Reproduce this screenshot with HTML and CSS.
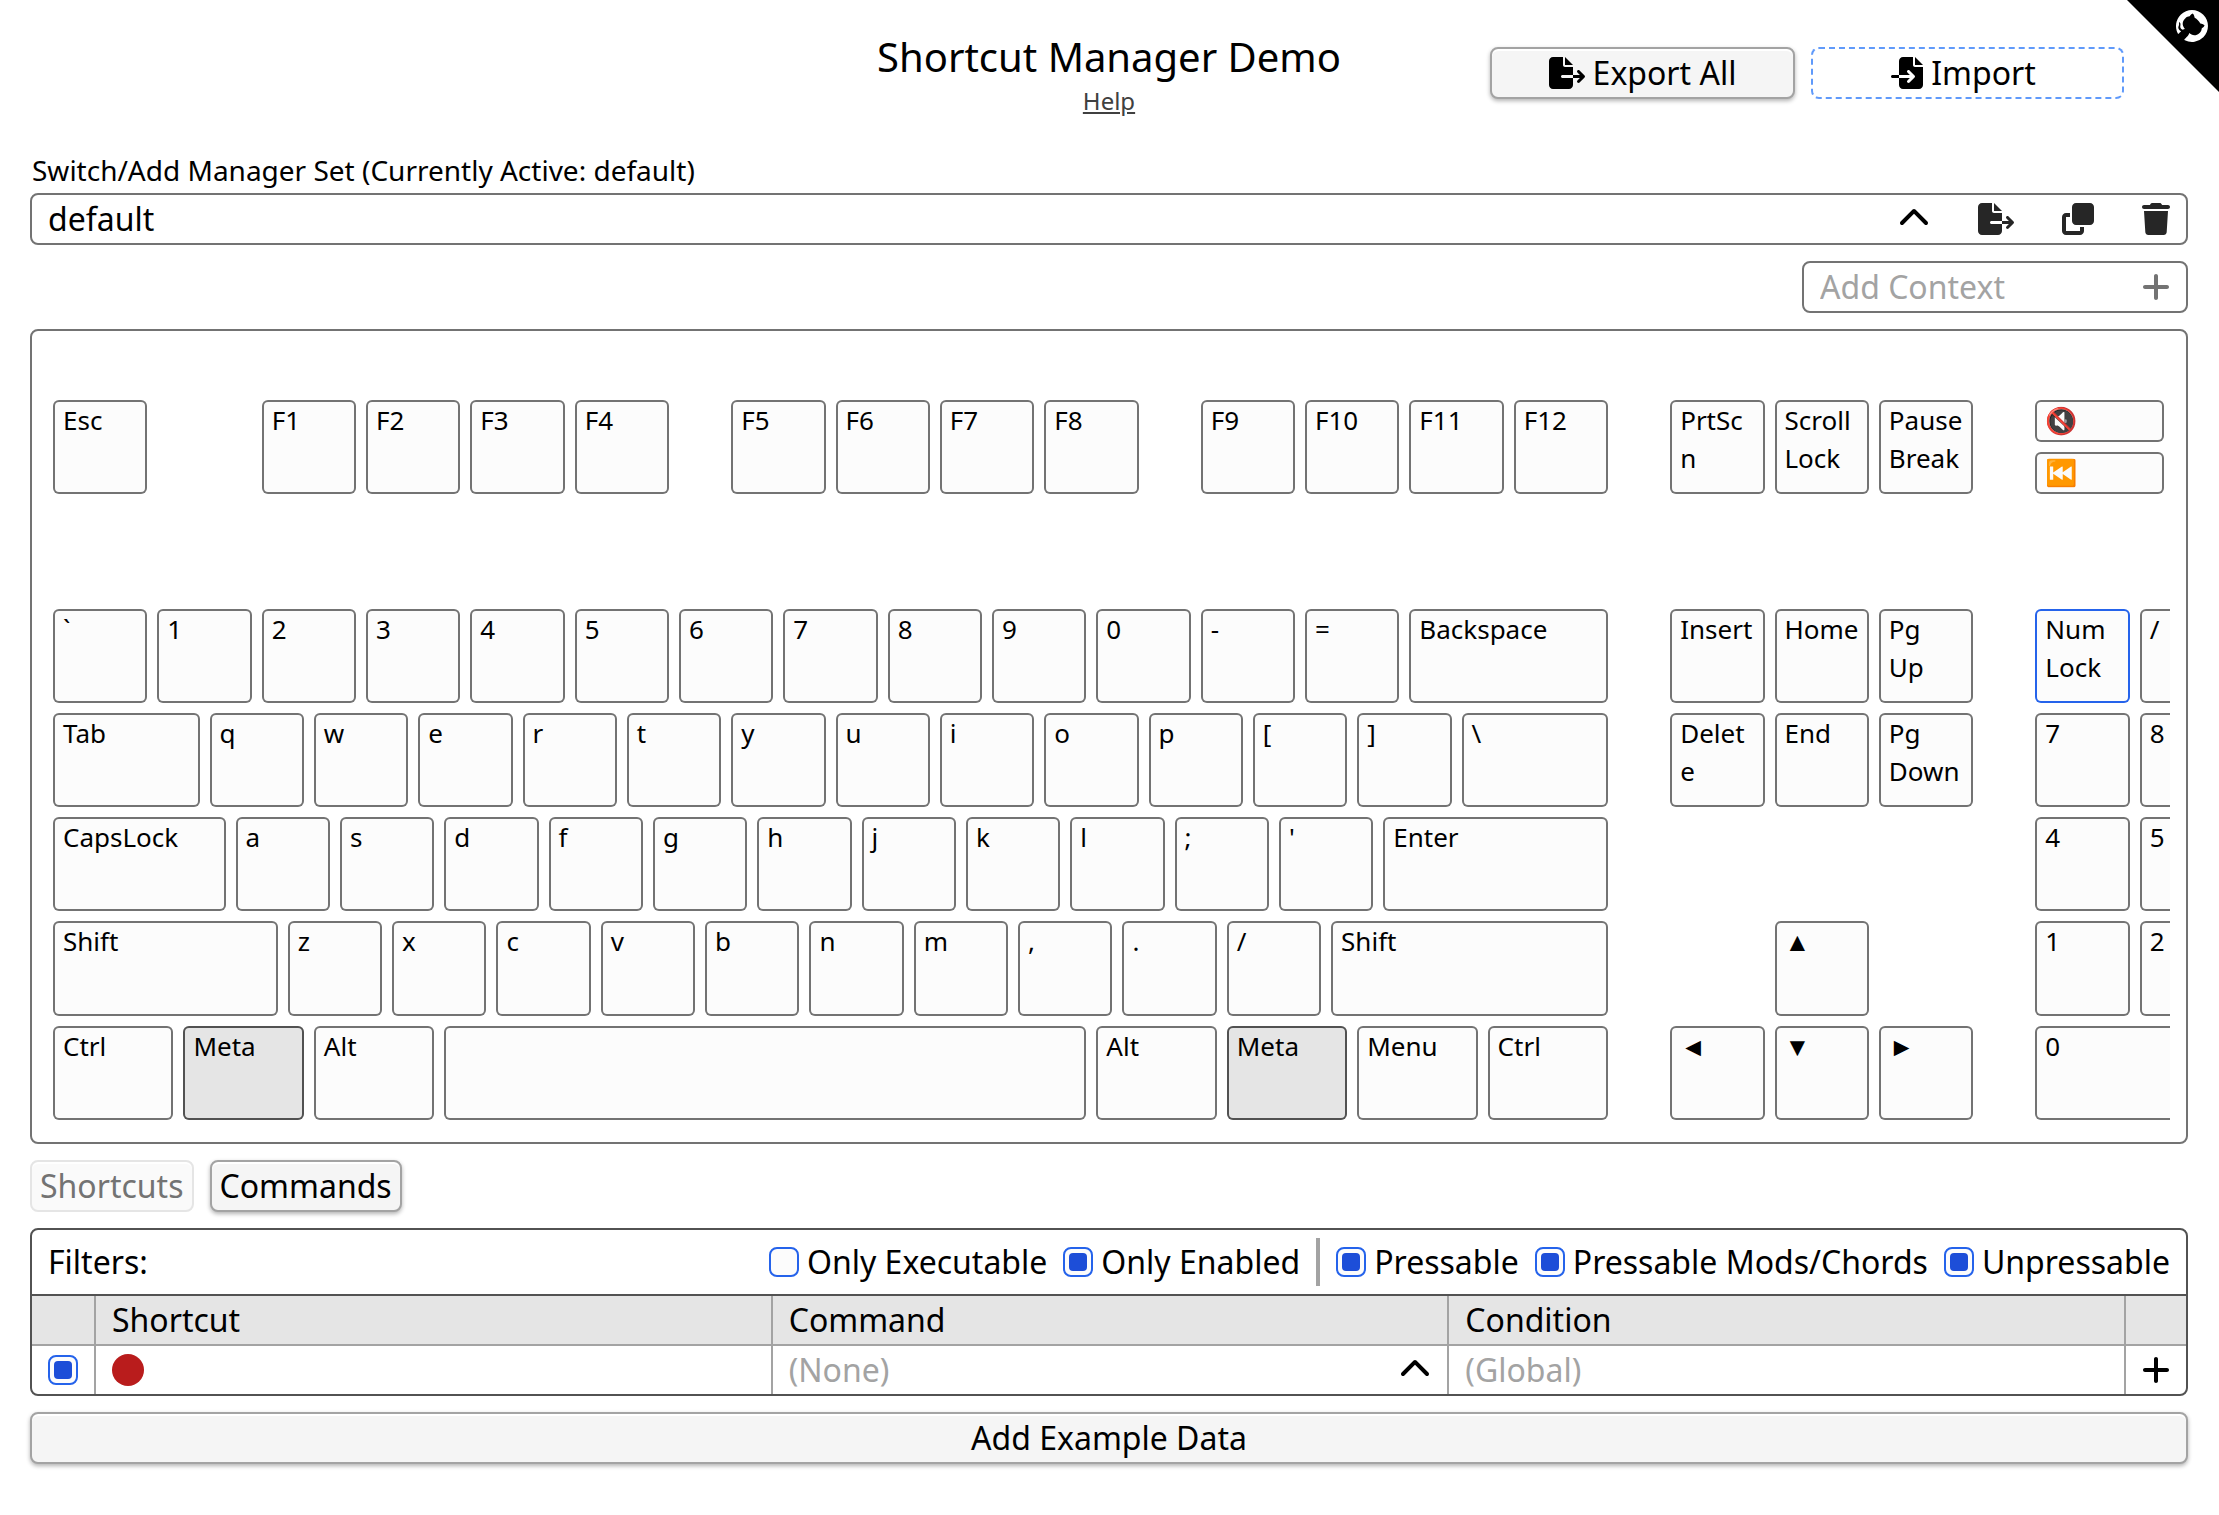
FILE: index.html
```html
<!DOCTYPE html>
<html lang="en">
<head>
<meta charset="utf-8">
<meta name="viewport" content="width=device-width, initial-scale=1">
<title>Shortcut Manager Demo</title>
<link rel="stylesheet" href="styles.css">
</head>
<body>
<svg class="sprite" aria-hidden="true">
  <symbol id="i-export" viewBox="0 0 576 512"><path d="M0 64C0 28.7 28.7 0 64 0H224V128c0 17.7 14.3 32 32 32H384V288H216c-13.3 0-24 10.7-24 24s10.7 24 24 24H384V448c0 35.3-28.7 64-64 64H64c-35.3 0-64-28.7-64-64V64zM384 336V288H494.1l-39-39c-9.4-9.4-9.4-24.6 0-33.9s24.6-9.4 33.9 0l80 80c9.4 9.4 9.4 24.6 0 33.9l-80 80c-9.4 9.4-24.6 9.4-33.9 0s-9.4-24.6 0-33.9l39-39H384zm0-208H256V0L384 128z"/></symbol>
  <symbol id="i-import" viewBox="0 0 512 512"><path d="M128 64c0-35.3 28.7-64 64-64H352V128c0 17.7 14.3 32 32 32H512V448c0 35.3-28.7 64-64 64H192c-35.3 0-64-28.7-64-64V336H302.1l-39 39c-9.4 9.4-9.4 24.6 0 33.9s24.6 9.4 33.9 0l80-80c9.4-9.4 9.4-24.6 0-33.9l-80-80c-9.4-9.4-24.6-9.4-33.9 0s-9.4 24.6 0 33.9l39 39H128V64zm0 224v48H24c-13.3 0-24-10.7-24-24s10.7-24 24-24H128zM512 128H384V0L512 128z"/></symbol>
  <symbol id="i-chevron" viewBox="0 0 512 512"><path d="M233.4 105.4c12.5-12.5 32.8-12.5 45.3 0l192 192c12.5 12.5 12.5 32.8 0 45.3s-32.8 12.5-45.3 0L256 173.3 86.6 342.6c-12.5 12.5-32.8 12.5-45.3 0s-12.5-32.8 0-45.3l192-192z"/></symbol>
  <symbol id="i-clone" viewBox="0 0 512 512"><path d="M288 448H64V224h64V160H64c-35.3 0-64 28.7-64 64V448c0 35.3 28.7 64 64 64H288c35.3 0 64-28.7 64-64V384H288v64zm-64-96H448c35.3 0 64-28.7 64-64V64c0-35.3-28.7-64-64-64H224c-35.3 0-64 28.7-64 64V288c0 35.3 28.7 64 64 64z"/></symbol>
  <symbol id="i-trash" viewBox="0 0 448 512"><path d="M135.2 17.7L128 32H32C14.3 32 0 46.3 0 64S14.3 96 32 96H416c17.7 0 32-14.3 32-32s-14.3-32-32-32H320l-7.2-14.3C307.4 6.8 296.3 0 284.2 0H163.8c-12.1 0-23.2 6.8-28.6 17.7zM416 128H32L53.2 467c1.6 25.3 22.6 45 47.9 45H346.9c25.3 0 46.3-19.7 47.9-45L416 128z"/></symbol>
  <symbol id="i-plus" viewBox="0 0 448 512"><path d="M256 80c0-17.7-14.3-32-32-32s-32 14.3-32 32V224H48c-17.7 0-32 14.3-32 32s14.3 32 32 32H192V432c0 17.7 14.3 32 32 32s32-14.3 32-32V288H400c17.7 0 32-14.3 32-32s-14.3-32-32-32H256V80z"/></symbol>
</svg>

<a class="corner" href="#source" aria-label="View source on GitHub">
  <svg viewBox="0 0 92 92" aria-hidden="true">
    <path d="M0 0H92V92Z"/>
    <g transform="translate(65 26) rotate(45) scale(2) translate(-8 -8)"><path class="mark" d="M8 0C3.58 0 0 3.58 0 8c0 3.54 2.29 6.53 5.47 7.59.4.07.55-.17.55-.38 0-.19-.01-.82-.01-1.49-2.01.37-2.53-.49-2.69-.94-.09-.23-.48-.94-.82-1.13-.28-.15-.68-.52-.01-.53.63-.01 1.08.58 1.23.82.72 1.21 1.87.87 2.33.66.07-.52.28-.87.51-1.07-1.78-.2-3.64-.89-3.64-3.95 0-.87.31-1.59.82-2.15-.08-.2-.36-1.02.08-2.12 0 0 .67-.21 2.2.82.64-.18 1.32-.27 2-.27.68 0 1.36.09 2 .27 1.53-1.04 2.2-.82 2.2-.82.44 1.1.16 1.92.08 2.12.51.56.82 1.27.82 2.15 0 3.07-1.87 3.75-3.65 3.95.29.25.54.73.54 1.48 0 1.07-.01 1.93-.01 2.2 0 .21.15.46.55.38A8.013 8.013 0 0016 8c0-4.42-3.58-8-8-8z"/></g>
  </svg>
</a>

<header class="top">
  <div class="heading">
    <h1>Shortcut Manager Demo</h1>
    <a class="help" href="#help">Help</a>
  </div>
  <div class="top-actions">
    <button type="button" class="btn export"><svg class="icon wide"><use href="#i-export"/></svg>Export All</button>
    <button type="button" class="btn import"><svg class="icon"><use href="#i-import"/></svg>Import</button>
  </div>
</header>

<main>
  <label class="set-label" for="set">Switch/Add Manager Set (Currently Active: default)</label>
  <div class="field set">
    <input id="set" type="text" value="default">
    <button type="button" class="icon-btn" aria-label="Show sets"><svg class="icon"><use href="#i-chevron"/></svg></button>
    <button type="button" class="icon-btn soft" aria-label="Export set"><svg class="icon wide"><use href="#i-export"/></svg></button>
    <button type="button" class="icon-btn soft" aria-label="Duplicate set"><svg class="icon"><use href="#i-clone"/></svg></button>
    <button type="button" class="icon-btn soft" aria-label="Delete set"><svg class="icon narrow"><use href="#i-trash"/></svg></button>
  </div>

  <div class="field context">
    <input type="text" placeholder="Add Context" aria-label="Add Context">
    <button type="button" class="icon-btn muted" aria-label="Add"><svg class="icon narrow"><use href="#i-plus"/></svg></button>
  </div>

  <section class="panel" aria-label="Keyboard">
    <div class="clip">
      <div class="keyboard">
        <div class="row">
          <button class="key">Esc</button><span class="k4"></span>
          <button class="key">F1</button><button class="key">F2</button><button class="key">F3</button><button class="key">F4</button><span class="k2"></span>
          <button class="key">F5</button><button class="key">F6</button><button class="key">F7</button><button class="key">F8</button><span class="k2"></span>
          <button class="key">F9</button><button class="key">F10</button><button class="key">F11</button><button class="key">F12</button><span class="k2"></span>
          <button class="key">PrtScn</button><button class="key">Scroll Lock</button><button class="key">Pause Break</button><span class="k2"></span>
          <div class="media k6"><button class="key">🔇</button><button class="key">⏮️</button></div>
        </div>
        <div class="row"></div>
        <div class="row">
          <button class="key">`</button><button class="key">1</button><button class="key">2</button><button class="key">3</button><button class="key">4</button><button class="key">5</button><button class="key">6</button><button class="key">7</button><button class="key">8</button><button class="key">9</button><button class="key">0</button><button class="key">-</button><button class="key">=</button><button class="key k8">Backspace</button><span class="k2"></span>
          <button class="key">Insert</button><button class="key">Home</button><button class="key">Pg<br>Up</button><span class="k2"></span>
          <button class="key active">Num Lock</button><button class="key">/</button>
        </div>
        <div class="row">
          <button class="key k6">Tab</button><button class="key">q</button><button class="key">w</button><button class="key">e</button><button class="key">r</button><button class="key">t</button><button class="key">y</button><button class="key">u</button><button class="key">i</button><button class="key">o</button><button class="key">p</button><button class="key">[</button><button class="key">]</button><button class="key k6">\</button><span class="k2"></span>
          <button class="key">Delete</button><button class="key">End</button><button class="key">Pg Down</button><span class="k2"></span>
          <button class="key">7</button><button class="key">8</button>
        </div>
        <div class="row">
          <button class="key k7">CapsLock</button><button class="key">a</button><button class="key">s</button><button class="key">d</button><button class="key">f</button><button class="key">g</button><button class="key">h</button><button class="key">j</button><button class="key">k</button><button class="key">l</button><button class="key">;</button><button class="key">'</button><button class="key k9">Enter</button><span class="k16"></span>
          <button class="key">4</button><button class="key">5</button>
        </div>
        <div class="row">
          <button class="key k9">Shift</button><button class="key">z</button><button class="key">x</button><button class="key">c</button><button class="key">v</button><button class="key">b</button><button class="key">n</button><button class="key">m</button><button class="key">,</button><button class="key">.</button><button class="key">/</button><button class="key k11">Shift</button><span class="k6"></span>
          <button class="key">▲</button><span class="k6"></span>
          <button class="key">1</button><button class="key">2</button>
        </div>
        <div class="row">
          <button class="key k5">Ctrl</button><button class="key k5 mod">Meta</button><button class="key k5">Alt</button><button class="key k25" aria-label="Space"></button><button class="key k5">Alt</button><button class="key k5 mod">Meta</button><button class="key k5">Menu</button><button class="key k5">Ctrl</button><span class="k2"></span>
          <button class="key">◄</button><button class="key">▼</button><button class="key">►</button><span class="k2"></span>
          <button class="key k8">0</button>
        </div>
      </div>
    </div>
  </section>

  <nav class="tabs">
    <button type="button" class="btn" disabled>Shortcuts</button>
    <button type="button" class="btn">Commands</button>
  </nav>

  <section class="list">
    <div class="filters">
      <span class="filters-title">Filters:</span>
      <label><input type="checkbox">Only Executable</label>
      <label><input type="checkbox" checked>Only Enabled</label>
      <span class="divider"></span>
      <label><input type="checkbox" checked>Pressable</label>
      <label><input type="checkbox" checked>Pressable Mods/Chords</label>
      <label><input type="checkbox" checked>Unpressable</label>
    </div>
    <table>
      <thead>
        <tr><th class="col-check"></th><th>Shortcut</th><th>Command</th><th>Condition</th><th class="col-add"></th></tr>
      </thead>
      <tbody>
        <tr>
          <td class="col-check"><input type="checkbox" checked aria-label="Enabled"></td>
          <td><div class="cell"><button type="button" class="record" aria-label="Record shortcut"></button></div></td>
          <td><div class="cell"><input type="text" placeholder="(None)" aria-label="Command"><button type="button" class="icon-btn" aria-label="Show commands"><svg class="icon"><use href="#i-chevron"/></svg></button></div></td>
          <td><div class="cell"><input type="text" placeholder="(Global)" aria-label="Condition"></div></td>
          <td class="col-add"><button type="button" class="icon-btn" aria-label="Add shortcut"><svg class="icon narrow"><use href="#i-plus"/></svg></button></td>
        </tr>
      </tbody>
    </table>
  </section>

  <button type="button" class="btn example">Add Example Data</button>
</main>
</body>
</html>
```
FILE: styles.css
```css
* { box-sizing: border-box; }

body {
  margin: 0;
  padding: 29px 31px 48px 30px;
  background: #fff;
  color: #000;
  font-family: "Noto Sans", sans-serif;
  font-size: 32px;
  line-height: 48px;
}

button, input {
  margin: 0;
  padding: 0;
  border: 0;
  background: none;
  color: inherit;
  font: inherit;
}

.sprite { position: absolute; width: 0; height: 0; }

.icon { width: 32px; height: 32px; fill: currentColor; flex: none; display: block; }
.icon.wide { width: 36px; }
.icon.narrow { width: 28px; }

.icon-btn { display: flex; align-items: center; flex: none; }
.icon-btn.soft { color: #262626; }
.icon-btn.muted { color: #737373; }

/* GitHub corner */
.corner { position: absolute; top: 0; right: 0; width: 92px; height: 92px; }
.corner svg { display: block; }
.mark { fill: #fff; }

/* Header */
.top {
  display: grid;
  grid-template-columns: 1fr auto 1fr;
  align-items: center;
}
.heading { grid-column: 2; text-align: center; display: flex; flex-direction: column; align-items: center; }
h1 { margin: 0; font-size: 40px; font-weight: 400; line-height: 56px; }
.help {
  color: #404040;
  font-size: 24px;
  line-height: 32px;
}
.top-actions { display: flex; justify-content: flex-end; gap: 16px; padding-right: 64px; }

.btn {
  display: flex;
  align-items: center;
  justify-content: center;
  gap: 8px;
  padding: 0 8px;
  border: 2px solid #a3a3a3;
  border-radius: 8px;
  background: #f5f5f5;
  box-shadow: inset 0 2px 0 #fff, 0 2px 4px rgba(0, 0, 0, 0.3);
}
.btn:disabled {
  border-color: #e5e5e5;
  background: #fafafa;
  box-shadow: inset 0 2px 0 #fff;
  color: #737373;
}
.export { width: 305px; }
.import {
  width: 313px;
  padding-right: 16px;
  border: 2px dashed #609afa;
  background: none;
  box-shadow: none;
}

/* Fields */
.set-label { display: block; margin: 32px 0 2px; font-size: 28px; line-height: 42px; padding-left: 2px; }
.field {
  display: flex;
  align-items: center;
  gap: 48px;
  padding: 0 16px;
  border: 2px solid #737373;
  border-radius: 8px;
}
input[type="text"] { flex: 1; min-width: 0; height: 48px; outline: 0; }
input::placeholder { color: #a3a3a3; opacity: 1; }
.context { width: 386px; margin: 16px 0 16px auto; }

/* Keyboard: every row is a grid of quarter-key columns */
.panel { border: 2px solid #737373; border-radius: 8px; padding: 69px 16px 22px 21px; }
.clip { overflow: hidden; }
.keyboard { width: 2181px; height: 720px; display: grid; grid-template-rows: repeat(7, 1fr); gap: 10px; }
.row { display: grid; grid-template-columns: repeat(84, 1fr); column-gap: 10px; }
.key {
  grid-column: span 4;
  display: flex;
  flex-direction: column;
  justify-content: flex-start;
  min-width: 0;
  padding: 1px 9px 0 10px;
  border-radius: 6px;
  background: #fcfcfc;
  box-shadow: inset 0 0 0 2px #737373;
  font-size: 26px;
  line-height: 38px;
  text-align: left;
  overflow-wrap: anywhere;
}
.key.active { box-shadow: inset 0 0 0 2px #2563eb; }
.key.mod { background: #e5e5e5; box-shadow: inset 0 0 0 2px #525252; }
.k2 { grid-column: span 2; }
.k4 { grid-column: span 4; }
.k5 { grid-column: span 5; }
.k6 { grid-column: span 6; }
.k7 { grid-column: span 7; }
.k8 { grid-column: span 8; }
.k9 { grid-column: span 9; }
.k11 { grid-column: span 11; }
.k16 { grid-column: span 16; }
.k25 { grid-column: span 25; }
.media { display: grid; grid-template-rows: 1fr 1fr; gap: 10px; width: 129px; }
.media .key { grid-column: auto; }

/* Tabs */
.tabs { display: flex; gap: 16px; margin: 16px 0; }

/* Shortcut list */
.list { border: 2px solid #525252; border-radius: 8px; overflow: hidden; }
.filters { display: flex; align-items: center; gap: 16px; padding: 8px 16px; border-bottom: 2px solid #525252; }
.filters-title { margin-right: auto; }
.filters label { display: flex; align-items: center; gap: 8px; }
.divider { width: 4px; align-self: stretch; background: #a3a3a3; }

input[type="checkbox"] {
  appearance: none;
  width: 30px;
  height: 30px;
  padding: 4px;
  border: 2px solid #2563eb;
  border-radius: 8px;
  background: #fcfcfc;
  display: block;
}
input[type="checkbox"]:checked::before {
  content: "";
  display: block;
  width: 18px;
  height: 18px;
  border-radius: 4px;
  background: #1d4ed8;
}

table { width: 100%; table-layout: fixed; border-collapse: separate; border-spacing: 0; }
th, td { height: 48px; padding: 0 16px; text-align: left; font-weight: 400; border-right: 2px solid #a3a3a3; }
th { height: 50px; background: #e5e5e5; border-bottom: 2px solid #a3a3a3; }
th:last-child, td:last-child { border-right: 0; }
.col-check { width: 64px; }
.col-add { width: 60px; }
.cell { display: flex; align-items: center; gap: 16px; height: 48px; }
.record { width: 32px; height: 32px; border-radius: 50%; background: #b91c1c; }

.example { width: 100%; margin-top: 16px; }
```
